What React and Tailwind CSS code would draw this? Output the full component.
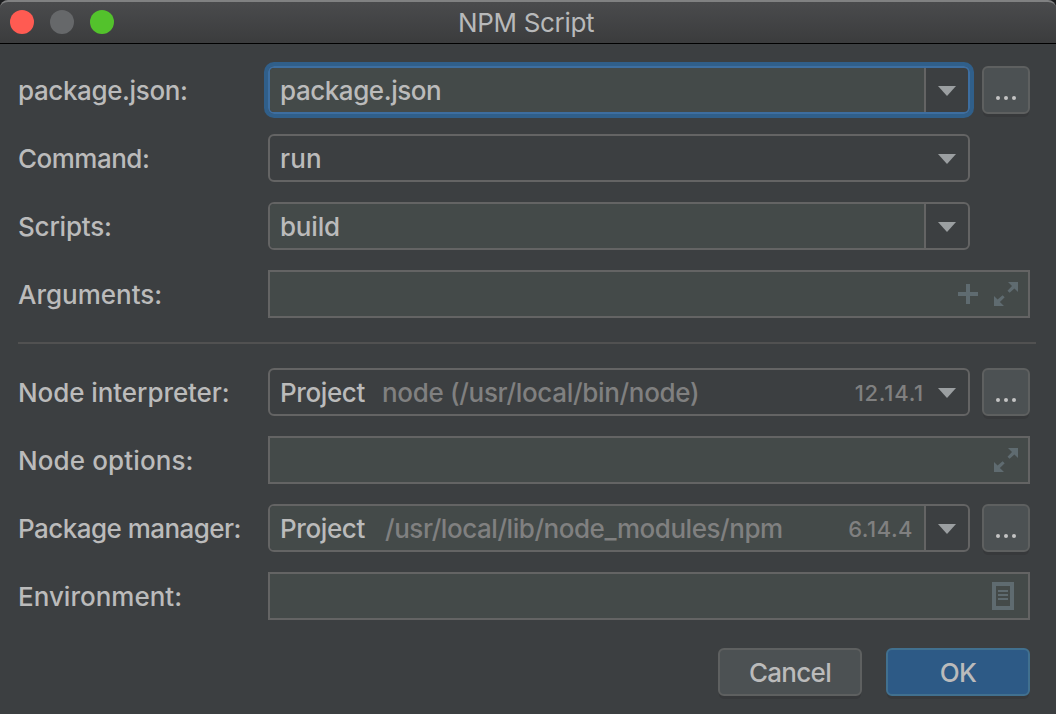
function Caret() {
  return (
    <svg className="block h-[10px] w-[18px] shrink-0" viewBox="0 0 18 10">
      <path d="M0 0h18L9 10z" fill="#9b9fa1" />
    </svg>
  );
}

function ExpandIcon() {
  return (
    <svg className="block size-6 shrink-0" viewBox="0 0 24 24" fill="#5f6b70">
      <path d="M14 0h10v10l-3.6-3.6-4.8 4.4-2.1-2.1 4.5-4.6z" />
      <path d="M10 24H0V14l3.6 3.6 5-4.4 2.1 2.1-4.8 4.6z" />
    </svg>
  );
}

function PlusIcon() {
  return (
    <svg className="block size-5 shrink-0" viewBox="0 0 20 20" fill="#5f6b70">
      <path d="M8 0h4v8h8v4h-8v8H8v-8H0V8h8z" />
    </svg>
  );
}

function DocumentIcon() {
  return (
    <svg className="block h-7 w-[22px] shrink-0" viewBox="0 0 22 28" fill="#5f6b70">
      <path fillRule="evenodd" d="M0 0h22v28H0zM4 4v20h14V4z" />
      <path d="M6 8h10v2H6zM6 12h10v2H6zM6 16h10v2H6z" />
    </svg>
  );
}

function Row({ label, tracking, children }) {
  return (
    <div className="flex h-12 items-center">
      <div className={`w-[250px] shrink-0 pt-[2px] ${tracking}`}>{label}</div>
      {children}
    </div>
  );
}

function Combo({ editable, focused, children }) {
  return (
    <div
      className={`flex h-12 w-[702px] shrink-0 overflow-hidden rounded-[6px] border-2 ${
        focused ? "border-[#3d6ea0] shadow-[0_0_0_4px_#305f8a]" : "border-[#646464]"
      }`}
    >
      <div
        className={`flex flex-1 items-center pt-[2px] pl-[10px] ${
          editable ? "border-r-2 border-[#646464] bg-[#444a49]" : "pr-[2px]"
        }`}
      >
        {children}
      </div>
      <div className="flex w-[42px] items-center justify-center pt-[2px]">
        <Caret />
      </div>
    </div>
  );
}

function TextField({ children }) {
  return (
    <div className="flex h-12 w-[762px] shrink-0 items-center justify-end border-2 border-[#646464] bg-[#444a49]">
      {children}
    </div>
  );
}

function BrowseButton() {
  return (
    <button className="ml-3 flex h-12 w-12 shrink-0 items-end justify-center gap-1 rounded-[6px] border-2 border-[#5e6060] bg-[#4c5153] pb-3 shadow-[0_4px_0_-1px_#37393b]">
      <span className="size-1 rounded-full bg-[#c4c4c4]" />
      <span className="size-1 rounded-full bg-[#c4c4c4]" />
      <span className="size-1 rounded-full bg-[#c4c4c4]" />
    </button>
  );
}

export default function App() {
  return (
    <div className="flex h-[714px] w-[1056px] flex-col overflow-hidden bg-[#1c1d1f] font-['Inter',sans-serif] text-[26px] leading-8 font-[450] whitespace-nowrap text-[#bbbbbb]">
      <div className="flex h-[44px] shrink-0 items-center rounded-t-[8px] border-t-2 border-b border-t-[#808182] border-b-black bg-linear-to-b from-[#4a4b4d] to-[#3b3c3d] pl-[10px]">
        <div className="flex w-[448px] gap-4 pb-px">
          <span className="size-6 rounded-full bg-[#ff5b52]" />
          <span className="size-6 rounded-full bg-[#66686a]" />
          <span className="size-6 rounded-full bg-[#53c22c]" />
        </div>
        <h1 className="font-normal tracking-[-0.327px] text-[#b8b9ba]">NPM Script</h1>
      </div>

      <div className="flex flex-1 flex-col bg-[#3c3f41] px-[18px] pt-[22px]">
        <div className="flex flex-col gap-5">
          <Row label="package.json:" tracking="tracking-[-0.38px]">
            <Combo editable focused>
              <span className="tracking-[-0.44px]">package.json</span>
            </Combo>
            <BrowseButton />
          </Row>
          <Row label="Command:" tracking="tracking-[-0.5px]">
            <Combo>
              <span className="tracking-[0.1px]">run</span>
            </Combo>
          </Row>
          <Row label="Scripts:" tracking="tracking-[-0.2px]">
            <Combo editable>
              <span className="tracking-[-0.2px]">build</span>
            </Combo>
          </Row>
          <Row label="Arguments:" tracking="tracking-[0px]">
            <TextField>
              <div className="flex items-center gap-4 pr-[10px]">
                <PlusIcon />
                <ExpandIcon />
              </div>
            </TextField>
          </Row>
        </div>

        <div className="mt-6 h-[2px] w-[1018px] shrink-0 bg-[#515151]" />

        <div className="mt-6 flex flex-col gap-5">
          <Row label="Node interpreter:" tracking="tracking-[-0.07px]">
            <Combo>
              <span className="w-[102px] tracking-[-0.38px]">Project</span>
              <span className="tracking-[-0.32px] text-[#808080]">node (/usr/local/bin/node)</span>
              <span className="ml-auto text-[22px] tracking-[0.75px] text-[#808080]">12.14.1</span>
            </Combo>
            <BrowseButton />
          </Row>
          <Row label="Node options:" tracking="tracking-[0.12px]">
            <TextField>
              <div className="pr-[10px]">
                <ExpandIcon />
              </div>
            </TextField>
          </Row>
          <Row label="Package manager:" tracking="tracking-[-0.54px]">
            <Combo editable>
              <span className="w-[105px] tracking-[-0.38px]">Project</span>
              <span className="tracking-[-0.45px] text-[#808080]">/usr/local/lib/node_modules/npm</span>
              <span className="mr-[11px] ml-auto text-[22px] tracking-[0.5px] text-[#808080]">6.14.4</span>
            </Combo>
            <BrowseButton />
          </Row>
          <Row label="Environment:" tracking="tracking-[0px]">
            <TextField>
              <div className="pr-[14px]">
                <DocumentIcon />
              </div>
            </TextField>
          </Row>
        </div>

        <div className="mt-7 flex justify-end gap-6 pr-2">
          <button className="h-12 w-36 rounded-[6px] border-2 border-[#5e6060] bg-[#4c5153] pt-[2px] tracking-[-0.7px] shadow-[0_4px_0_-1px_#37393b]">
            Cancel
          </button>
          <button className="h-12 w-36 rounded-[6px] border-2 border-[#41708f] bg-[#2d5a86] pt-[2px] tracking-[-0.6px] shadow-[0_4px_0_-1px_#37393b]">
            OK
          </button>
        </div>
      </div>
    </div>
  );
}
